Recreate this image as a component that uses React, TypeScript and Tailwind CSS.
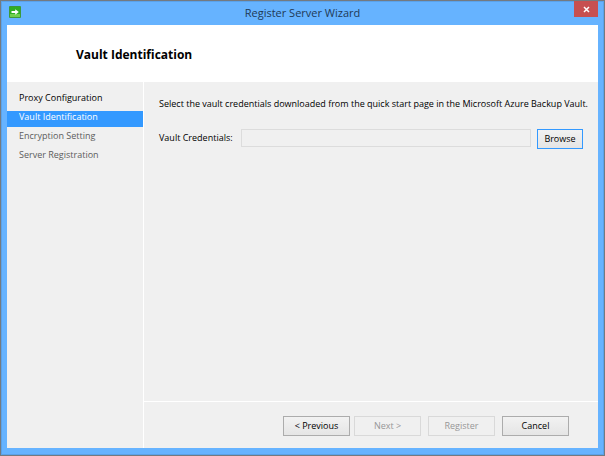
import type { ReactNode } from "react";

const steps = [
  { label: "Proxy Configuration", state: "done" },
  { label: "Vault Identification", state: "current" },
  { label: "Encryption Setting", state: "pending" },
  { label: "Server Registration", state: "pending" },
];

const stepStyles: Record<string, string> = {
  done: "text-black",
  current: "bg-[#3399ff] text-white",
  pending: "text-[#5c5c5c]",
};

function WizardButton({ children, disabled = false }: { children: ReactNode; disabled?: boolean }) {
  return (
    <button
      type="button"
      disabled={disabled}
      className="h-5 w-[67px] border border-[#acacac] bg-linear-to-b from-[#f2f2f2] to-[#e5e5e5] text-center leading-4 text-black disabled:border-[#d9d9d9] disabled:bg-none disabled:text-[#979797]"
    >
      {children}
    </button>
  );
}

function TitleBar() {
  return (
    <header className="grid h-6 grid-cols-[1fr_auto_1fr] items-start">
      <svg className="mt-[5px] ml-0.5 size-3" viewBox="0 0 12 12" aria-hidden="true">
        <rect width="12" height="12" rx="1" fill="#3c9a3a" />
        <rect x="1" y="1" width="10" height="10" fill="#2fae25" />
        <path d="M1 8h10v3H1z" fill="#6fcf50" />
        <path d="M2.5 5h3.7V3.2L9.8 6 6.2 8.8V7H2.5z" fill="#fff" />
      </svg>
      <h1 className="text-[11px] leading-6 text-[#1f3a56]">Register Server Wizard</h1>
      <button
        type="button"
        aria-label="Close"
        className="flex h-4 w-6 items-center justify-center justify-self-end bg-[#c75050]"
      >
        <svg className="size-[7px]" viewBox="0 0 7 7" aria-hidden="true">
          <path d="M1 1l5 5M6 1L1 6" stroke="#fff" strokeWidth="1.5" />
        </svg>
      </button>
    </header>
  );
}

export default function App() {
  return (
    <div className="flex min-h-screen flex-col border border-[#747a80] bg-[#66b3ff] px-1.5 pb-[7px] font-['Open_Sans','Noto_Sans',sans-serif] text-[9px] inset-ring inset-ring-[#5aa2ea]">
      <TitleBar />
      <main className="flex grow flex-col bg-[#f0f0f0]">
        <div className="bg-white px-[69px] pt-5 pb-[17px]">
          <h2 className="text-[12px] leading-5 font-bold text-black">Vault Identification</h2>
        </div>
        <div className="flex grow">
          <nav aria-label="Wizard steps" className="w-[137px] shrink-0 border-r border-white pt-2.5">
            <ol>
              {steps.map((step) => (
                <li
                  key={step.label}
                  aria-current={step.state === "current" ? "step" : undefined}
                  className={`mb-[3px] h-4 pl-3 leading-3 ${stepStyles[step.state]}`}
                >
                  {step.label}
                </li>
              ))}
            </ol>
          </nav>
          <div className="flex min-w-0 grow flex-col text-black">
            <section className="grow pt-3.5 pl-[15px]">
              <p className="leading-4">
                Select the vault credentials downloaded from the quick start page in the Microsoft Azure Backup Vault.
              </p>
              <div className="mt-[17px] flex items-start pr-[15px]">
                <label htmlFor="credentials" className="w-[82px] shrink-0 leading-[18px]">
                  Vault Credentials:
                </label>
                <input
                  id="credentials"
                  type="text"
                  readOnly
                  className="h-[18px] min-w-0 grow border border-[#dcdcdc] bg-[#f0f0f0] px-1 outline-none"
                />
                <button
                  type="button"
                  className="ml-1.5 h-5 w-[46px] border border-[#3399ff] bg-linear-to-b from-[#f2f2f2] to-[#e5e5e5] leading-4"
                >
                  Browse
                </button>
              </div>
            </section>
            <footer className="flex justify-end border-t border-white pt-3.5 pr-[29px] pb-3">
              <WizardButton>{"< Previous"}</WizardButton>
              <div className="ml-1 flex gap-[7px]">
                <WizardButton disabled>{"Next >"}</WizardButton>
                <WizardButton disabled>Register</WizardButton>
                <WizardButton>Cancel</WizardButton>
              </div>
            </footer>
          </div>
        </div>
      </main>
    </div>
  );
}
